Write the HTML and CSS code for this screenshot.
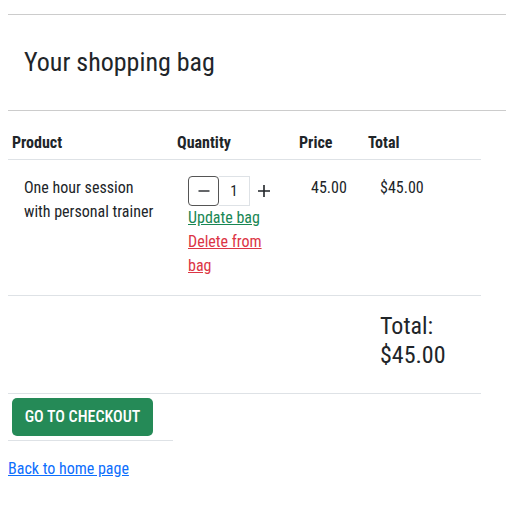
FILE: index.html
```html
<!DOCTYPE html>
<html lang="en">
<head>
<meta charset="utf-8">
<title>Your shopping bag</title>
<link rel="stylesheet" href="styles.css">
</head>
<body>
<header class="bag-header">
  <h1 class="bag-title">Your shopping bag</h1>
</header>
<table class="bag-table">
  <colgroup>
    <col class="col-product">
    <col class="col-qty">
    <col class="col-price">
    <col class="col-total">
  </colgroup>
  <thead>
    <tr>
      <th>Product</th>
      <th>Quantity</th>
      <th>Price</th>
      <th>Total</th>
    </tr>
  </thead>
  <tbody>
    <tr class="item-row">
      <td>One hour session with personal trainer</td>
      <td>
        <div class="qty-group">
          <button class="qty-btn qty-minus" type="button" aria-label="Decrease">
            <svg width="14" height="14" viewBox="0 0 14 14"><path d="M1.5 7h11" stroke="#212529" stroke-width="1.4"/></svg>
          </button>
          <input class="qty-input" type="text" value="1">
          <button class="qty-btn qty-plus" type="button" aria-label="Increase">
            <svg width="14" height="14" viewBox="0 0 14 14"><path d="M1 7h12M7 1v12" stroke="#212529" stroke-width="1.6"/></svg>
          </button>
        </div>
        <a class="link-update" href="#">Update bag</a><br>
        <a class="link-delete" href="#">Delete from bag</a>
      </td>
      <td>45.00</td>
      <td>$45.00</td>
    </tr>
    <tr class="total-row">
      <td></td>
      <td></td>
      <td></td>
      <td class="grand-total">Total: $45.00</td>
    </tr>
    <tr class="checkout-row">
      <td><a class="checkout-btn" href="#">Go to checkout</a></td>
    </tr>
  </tbody>
</table>
<p class="back"><a href="#">Back to home page</a></p>
</body>
</html>
```
FILE: styles.css
```css
body {
  margin: 8px;
  font-family: Roboto, "Noto Sans", sans-serif;
  font-stretch: 75%;
  color: #212529;
  background: #fff;
}

.bag-header {
  margin-top: 6px;
  border-top: 1px solid #cccccc;
  border-bottom: 1px solid #cccccc;
  height: 95px;
  display: flex;
  align-items: center;
  padding-left: 16px;
}

.bag-title {
  margin: 0;
  font-size: 26px;
  font-weight: 400;
  line-height: 32px;
  padding-bottom: 2px;
}

.bag-table {
  border-collapse: collapse;
  width: 473px;
  table-layout: fixed;
  font-size: 16px;
}

.col-product { width: 165px; }
.col-qty { width: 122px; }
.col-price { width: 69px; }
.col-total { width: 117px; }

.bag-table th {
  text-align: left;
  font-weight: 700;
  font-size: 16px;
  line-height: 24px;
  padding: 20px 4px 4px;
  vertical-align: middle;
  border-bottom: 1px solid #dee2e6;
}

.bag-table td {
  vertical-align: top;
  padding: 16px 16px 17px 16px;
  line-height: 24px;
  border-bottom: 1px solid #dee2e6;
}

.item-row td:nth-child(2) {
  padding: 16px 16px 17px 15px;
}

.qty-group {
  display: flex;
  align-items: center;
  height: 30px;
}

.qty-btn {
  display: flex;
  align-items: center;
  justify-content: center;
  padding: 0;
  background: #fff;
  cursor: pointer;
}

.qty-minus {
  width: 31px;
  height: 30px;
  border: 1px solid #555;
  border-radius: 4px;
}

.qty-input {
  width: 31px;
  height: 30px;
  box-sizing: border-box;
  border: 1px solid #dee2e6;
  border-left: none;
  text-align: center;
  font-family: inherit;
  font-stretch: 75%;
  font-size: 15px;
  color: #212529;
  padding: 0;
  outline: none;
}

.qty-plus {
  width: 28px;
  height: 30px;
  border: none;
}

.link-update { color: #198754; }
.link-delete { color: #dc3545; }

.total-row td {
  padding-top: 16px;
  padding-bottom: 23px;
}

.grand-total {
  font-size: 24px;
  line-height: 29px !important;
}

.checkout-row td {
  padding: 4px;
}

.checkout-btn {
  display: inline-flex;
  align-items: center;
  justify-content: center;
  width: 141px;
  height: 38px;
  background: #258a57;
  color: #fff;
  border-radius: 5px;
  text-decoration: none;
  text-transform: uppercase;
  font-size: 16px;
  font-weight: 500;
}

.back {
  margin: 18px 0 0;
  font-size: 16px;
}

.back a { color: #0d6efd; }
```
